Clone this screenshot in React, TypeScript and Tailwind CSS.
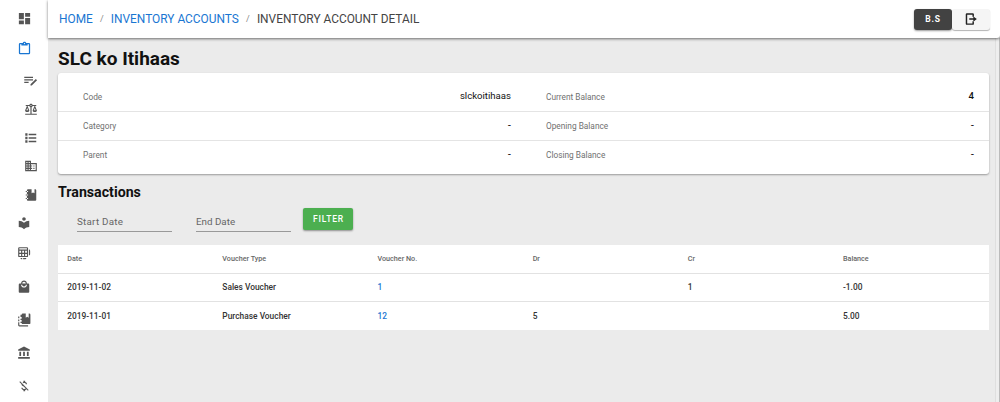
import type { ReactNode } from 'react';
import { MdDashboard, MdBusiness, MdLocalLibrary, MdLocalMall, MdAccountBalance, MdMoneyOff } from 'react-icons/md';

const clipboard = 'M19,3H14.82C14.4,1.84 13.3,1 12,1C10.7,1 9.6,1.84 9.18,3H5A2,2 0 0,0 3,5V19A2,2 0 0,0 5,21H19A2,2 0 0,0 21,19V5A2,2 0 0,0 19,3M12,3A1,1 0 0,1 13,4A1,1 0 0,1 12,5A1,1 0 0,1 11,4A1,1 0 0,1 12,3M7,7H17V5H19V19H5V5H7V7Z';
const playlistEdit = 'M2,6V8H16V6H2M2,10V12H16V10H2M2,14V16H9V14H2M20.5,9.5L22.5,11.5L14,20H12V18L20.5,9.5Z';
const list = 'M8,4.8H21V7.2H8V4.8M8,10.8H21V13.2H8V10.8M8,16.8H21V19.2H8V16.8M2.2,4H6V8H2.2V4M2.2,10H6V14H2.2V10M2.2,16H6V20H2.2V16Z';
const scale = 'M12,3C10.73,3 9.6,3.8 9.18,5H3V7H4.95L2,14C1.53,16 3,17 5.5,17C8,17 9.56,16 9,14L6.05,7H9.17C9.5,7.85 10.15,8.5 11,8.83V20H2V22H22V20H13V8.82C13.85,8.5 14.5,7.85 14.82,7H17.95L15,14C14.53,16 16,17 18.5,17C21,17 22.56,16 22,14L19.05,7H21V5H14.83C14.4,3.8 13.27,3 12,3M12,5A1,1 0 0,1 13,6A1,1 0 0,1 12,7A1,1 0 0,1 11,6A1,1 0 0,1 12,5M5.5,10.25L7,14H4L5.5,10.25M18.5,10.25L20,14H17L18.5,10.25Z';
const notebook = 'M3,7V5H5V4A2,2 0 0,1 7,2H13V9L15.5,7.5L18,9V2H19C20.05,2 21,2.95 21,4V20C21,21.05 20.05,22 19,22H7C5.95,22 5,21.05 5,20V19H3V17H5V13H3V11H5V7H3M7,11H5V13H7V11M7,7V5H5V7H7M7,19V17H5V19H7Z';
const notebooks = 'M6,4V3H8A2,2 0 0,1 10,1H15V8L17.5,6.5L20,8V1H21A2,2 0 0,1 23,3V17A2,2 0 0,1 21,19H10A2,2 0 0,1 8,17H6V15H8V12H6V10H8V7H6V5M2,6H4V9H2V6M2,11H4V14H2V11M2,16H4V21H19V23H4A2,2 0 0,1 2,21V16Z';
const tables = 'M4,2H17A2,2 0 0,1 19,4V17A2,2 0 0,1 17,19H4A2,2 0 0,1 2,17V4A2,2 0 0,1 4,2M4,4V6H17V4H4M4,8V11.5H7V8H4M9,8V11.5H12V8H9M14,8V11.5H17V8H14M4,13.5V17H7V13.5H4M9,13.5V17H12V13.5H9M14,13.5V17H17V13.5H14M20.5,6A2,2 0 0,1 22.5,8V14A2,2 0 0,1 20.5,16V6M6,20.5H9V22.5H8A2,2 0 0,1 6,20.5M10.5,20.5H16A2,2 0 0,1 14,22.5H10.5V20.5Z';
const exit = 'M5,2H15A2,2 0 0,1 17,4V8H14.5V4.5H5.5V19.5H14.5V16H17V20A2,2 0 0,1 15,22H5A2,2 0 0,1 3,20V4A2,2 0 0,1 5,2M9,10.8H16V7.5L22,12L16,16.5V13.2H9V10.8Z';

function Glyph({ d, size = 14 }: { d: string; size?: number }) {
  return <svg width={size} height={size} viewBox="0 0 24 24" fill="currentColor" fillRule="evenodd"><path d={d} /></svg>;
}

function NavItem({ children, className }: { children: ReactNode; className: string }) {
  return <a className={`flex shrink-0 items-center justify-center ${className}`}>{children}</a>;
}

function Sidebar() {
  return (
    <nav className="flex h-full w-12 shrink-0 flex-col overflow-hidden bg-white pt-[3px] text-[#555]">
      <NavItem className="h-[30px]"><MdDashboard size={15} /></NavItem>
      <NavItem className="h-[31px] text-[#1976d2]"><Glyph d={clipboard} size={15} /></NavItem>
      <NavItem className="h-[32px] pl-[13px]"><Glyph d={playlistEdit} size={15} /></NavItem>
      <NavItem className="h-[26px] pl-[13px]"><Glyph d={scale} /></NavItem>
      <NavItem className="h-[31px] pl-[13px]"><Glyph d={list} size={14} /></NavItem>
      <NavItem className="h-[26px] pl-[13px]"><MdBusiness size={14} /></NavItem>
      <NavItem className="h-[31px] pl-[13px]"><Glyph d={notebook} /></NavItem>
      <NavItem className="h-[26px]"><MdLocalLibrary size={14} /></NavItem>
      <NavItem className="h-[34px]"><Glyph d={tables} /></NavItem>
      <NavItem className="h-[33px]"><MdLocalMall size={14} /></NavItem>
      <NavItem className="h-[33px]"><Glyph d={notebooks} /></NavItem>
      <NavItem className="h-[33px]"><MdAccountBalance size={14} /></NavItem>
      <NavItem className="h-[34px]"><MdMoneyOff size={14} /></NavItem>
    </nav>
  );
}

const details = [
  ['Code', 'slckoitihaas', 'Current Balance', '4'],
  ['Category', '-', 'Opening Balance', '-'],
  ['Parent', '-', 'Closing Balance', '-'],
];

const rows = [
  ['2019-11-02', 'Sales Voucher', '1', '', '1', '-1.00'],
  ['2019-11-01', 'Purchase Voucher', '12', '5', '', '5.00'],
];

function DetailCell({ label, value, first, className }: { label: string; value: string; first: boolean; className: string }) {
  return (
    <div className={`flex justify-between ${first ? 'h-[38px] pt-[18px]' : 'h-[29px] border-t border-[#e4e4e4] pt-[8px]'} ${className}`}>
      <span className="text-[8.3px] leading-[13px] text-[#707070]">{label}</span>
      <span className={`text-[9.6px] leading-[10px] text-[#111] ${value.length > 1 ? '' : 'font-medium'}`}>{value}</span>
    </div>
  );
}

export default function App() {
  return (
    <div className="flex h-[402px] w-[1000px] overflow-hidden bg-[#ebebeb] font-['Roboto',sans-serif] text-[#111]">
      <Sidebar />
      <div className="flex min-w-0 flex-1 flex-col">
        <header className="z-10 flex h-[38px] shrink-0 items-center rounded-br-[3px] bg-white pl-[11px] pr-[10px] shadow-[0_1px_3px_rgba(0,0,0,0.55)]">
          <div className="flex flex-1 items-center text-[11.9px] leading-4">
            <a className="text-[#1976d2]">HOME</a>
            <span className="w-[18px] text-center text-[9px] text-[#888]">/</span>
            <a className="text-[#1976d2]">INVENTORY ACCOUNTS</a>
            <span className="w-[18px] text-center text-[9px] text-[#888]">/</span>
            <span className="text-[#444]">INVENTORY ACCOUNT DETAIL</span>
          </div>
          <button className="h-[21px] w-[38px] rounded-[3px] bg-[#424242] text-[8.5px] font-bold tracking-[0.8px] text-white shadow-[0_1px_2px_rgba(0,0,0,0.4)]">B.S</button>
          <button className="flex h-[21px] w-[38px] items-center justify-center rounded-[3px] bg-[#f5f5f5] text-[#222] shadow-[0_1px_1px_rgba(0,0,0,0.3)]"><Glyph d={exit} /></button>
        </header>
        <div className="flex min-h-0 flex-1">
          <main className="min-w-0 flex-1 pl-[10px] pr-[6px] pt-[9px]">
            <h1 className="h-[26px] text-[19px] font-bold leading-[24px]">SLC ko Itihaas</h1>
            <section className="h-[101px] rounded-[3px] bg-white shadow-[0_1px_2px_rgba(0,0,0,0.35)]">
              {details.map(([a, b, c, d], i) => (
                <div key={a} className="flex">
                  <DetailCell label={a} value={b} first={i === 0} className="w-[463px] pl-[25px] pr-[10px]" />
                  <DetailCell label={c} value={d} first={i === 0} className="flex-1 pl-[25px] pr-[15px]" />
                </div>
              ))}
            </section>
            <h2 className="mt-[8px] h-[20px] text-[14.2px] font-bold leading-[20px]">Transactions</h2>
            <div className="flex h-[43px] pl-[19px] pt-[6px]">
              <div className="mr-[24px] mt-[4px] h-[20px] w-[95px] border-b border-[#999] text-[9.8px] leading-[19px] tracking-[0.25px] text-[#666]">Start Date</div>
              <div className="mr-[12px] mt-[4px] h-[20px] w-[95px] border-b border-[#999] text-[9.8px] leading-[19px] text-[#666]">End Date</div>
              <button className="h-[22px] w-[50px] rounded-[2px] bg-[#4caf50] pl-px text-[8.5px] font-medium tracking-[0.8px] text-white shadow-[0_1px_2px_rgba(0,0,0,0.4)]">FILTER</button>
            </div>
            <table className="w-full table-fixed border-collapse bg-white text-left">
              <thead>
                <tr className="h-[28px] text-[7.2px] text-[#666]">
                  {['Date', 'Voucher Type', 'Voucher No.', 'Dr', 'Cr', 'Balance'].map((h) => <th key={h} className="pb-0 pl-[9.2px] pt-px font-medium">{h}</th>)}
                </tr>
              </thead>
              <tbody>
                {rows.map((r) => (
                  <tr key={r[0]} className="h-[28.5px] border-t border-[#e2e2e2] text-[8.4px] leading-3 text-[#333]">
                    {r.map((c, i) => <td key={i} className={`pb-px pl-[9.2px] pt-0 font-medium ${i === 2 ? 'text-[#1976d2]' : ''}`}>{c}</td>)}
                  </tr>
                ))}
              </tbody>
            </table>
          </main>
          <div className="w-[5px] shrink-0 border-l border-r border-l-[#dfdfdf] border-r-[#bbb] bg-[#eee]" />
        </div>
      </div>
    </div>
  );
}
